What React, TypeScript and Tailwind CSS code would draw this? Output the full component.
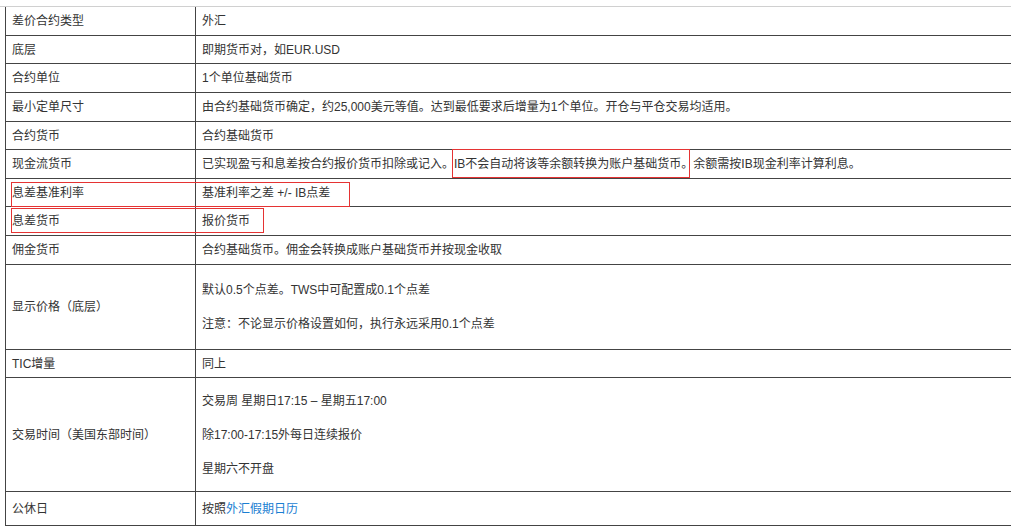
const rows: { h: number; label: string; body: React.ReactNode }[] = [
  { h: 28, label: "差价合约类型", body: "外汇" },
  { h: 28, label: "底层", body: "即期货币对，如EUR.USD" },
  { h: 29, label: "合约单位", body: "1个单位基础货币" },
  { h: 29, label: "最小定单尺寸", body: "由合约基础货币确定，约25,000美元等值。达到最低要求后增量为1个单位。开仓与平仓交易均适用。" },
  { h: 28, label: "合约货币", body: "合约基础货币" },
  { h: 29, label: "现金流货币", body: "已实现盈亏和息差按合约报价货币扣除或记入。IB不会自动将该等余额转换为账户基础货币。余额需按IB现金利率计算利息。" },
  { h: 28, label: "息差基准利率", body: "基准利率之差 +/- IB点差" },
  { h: 29, label: "息差货币", body: "报价货币" },
  { h: 29, label: "佣金货币", body: "合约基础货币。佣金会转换成账户基础货币并按现金收取" },
  {
    h: 85,
    label: "显示价格（底层）",
    body: (
      <div className="flex flex-col gap-[16px]">
        <span>默认0.5个点差。TWS中可配置成0.1个点差</span>
        <span>注意：不论显示价格设置如何，执行永远采用0.1个点差</span>
      </div>
    ),
  },
  { h: 28, label: "TIC增量", body: "同上" },
  {
    h: 114,
    label: "交易时间（美国东部时间）",
    body: (
      <div className="flex flex-col gap-[16px]">
        <span>交易周 星期日17:15 – 星期五17:00</span>
        <span>除17:00-17:15外每日连续报价</span>
        <span>星期六不开盘</span>
      </div>
    ),
  },
  {
    h: 34,
    label: "公休日",
    body: (
      <span>
        按照<span className="text-[#1a7ed2]">外汇假期日历</span>
      </span>
    ),
  },
];

export default function App() {
  return (
    <div
      className="relative h-[528px] w-[1011px] overflow-hidden bg-white text-[12px] text-[#333]"
      style={{ fontFamily: '"Liberation Sans", "Noto Sans CJK SC", sans-serif' }}
    >
      <div className="h-[7px] border-b border-[#d0d0d0]" />
      <div className="ml-[5px] w-[1030px] border-l border-b border-[#444]">
        {rows.map((r, i) => (
          <div
            key={i}
            className={`flex ${i === 0 ? "" : "border-t border-[#444]"}`}
            style={{ height: r.h }}
          >
            <div className="flex w-[190px] shrink-0 items-center border-r border-[#444] pl-[6px]">
              {r.label}
            </div>
            <div className="flex items-center pl-[6px]">{r.body}</div>
          </div>
        ))}
      </div>
      <div className="absolute left-[452px] top-[149px] h-[29px] w-[238px] border border-[#e53333]" />
      <div className="absolute left-[11px] top-[182px] h-[25px] w-[339px] border border-[#e53333]" />
      <div className="absolute left-[11px] top-[208px] h-[25px] w-[253px] border border-[#e53333]" />
    </div>
  );
}
